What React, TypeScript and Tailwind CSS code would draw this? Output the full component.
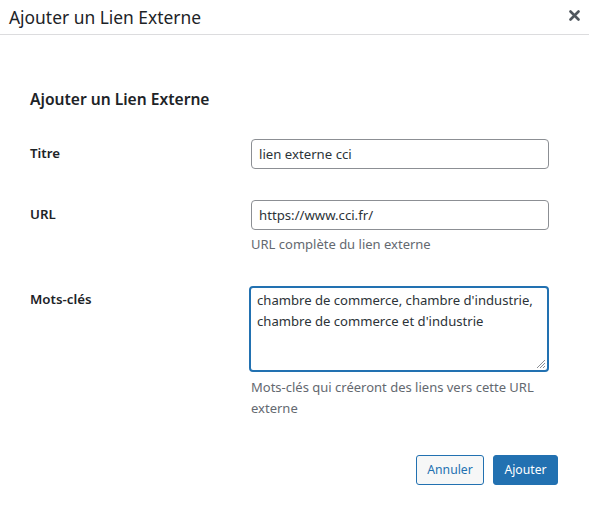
import React from "react";

const font = { fontFamily: '"Noto Sans", "Open Sans", sans-serif' };

function Row({ label, children, labelTop }: { label: string; children: React.ReactNode; labelTop: string }) {
  return (
    <div className="grid grid-cols-[221px_298px]">
      <div className={`text-[13.3px] font-semibold text-[#1d2327] ${labelTop}`}>{label}</div>
      <div>{children}</div>
    </div>
  );
}

export default function App() {
  return (
    <div className="w-[589px] h-[509px] bg-white text-[#2c3338]" style={font}>
      <div className="h-[35px] border-b border-[#dcdcde] flex items-center justify-between pl-[9px] pr-[8px]">
        <h1 className="text-[17.4px] leading-[24px] text-[#1d2327] -mt-[1px]">Ajouter un Lien Externe</h1>
        <button className="w-[14px] h-[14px] flex items-center justify-center -mt-[3px]" aria-label="Fermer">
          <svg width="11" height="11" viewBox="0 0 11 11">
            <path d="M1.5 1.5 L9.5 9.5 M9.5 1.5 L1.5 9.5" stroke="#50575e" strokeWidth="2.6" strokeLinecap="round" />
          </svg>
        </button>
      </div>

      <div className="pl-[30px] pt-[53px]">
        <h2 className="text-[15.6px] leading-[22px] font-semibold text-[#1d2327]">Ajouter un Lien Externe</h2>

        <div className="mt-[29px] flex flex-col">
          <Row label="Titre" labelTop="pt-[5px]">
            <input
              readOnly
              value="lien externe cci"
              className="w-[298px] h-[30px] border border-[#8c8f94] rounded-[4px] px-[7px] text-[13.2px] text-[#2c3338] outline-none"
              style={font}
            />
          </Row>

          <div className="h-[31px]" />

          <Row label="URL" labelTop="pt-[5px]">
            <input
              readOnly
              value="https://www.cci.fr/"
              className="w-[298px] h-[30px] border border-[#8c8f94] rounded-[4px] px-[7px] text-[13.2px] text-[#2c3338] outline-none"
              style={font}
            />
            <p className="mt-[4px] text-[13px] leading-[20px] text-[#646970]">URL complète du lien externe</p>
          </Row>

          <div className="h-[32px]" />

          <Row label="Mots-clés" labelTop="pt-[4px]">
            <div className="relative -ml-[2px] w-[300px]">
              <textarea
                readOnly
                value={"chambre de commerce, chambre d'industrie,\nchambre de commerce et d'industrie"}
                className="block w-[300px] h-[86px] border-2 border-[#2271b1] rounded-[4px] px-[6px] pt-[2px] text-[13.1px] leading-[21px] text-[#2c3338] outline-none resize-none whitespace-pre overflow-hidden"
                style={font}
              />
              <svg className="absolute right-[3px] bottom-[3px]" width="10" height="10" viewBox="0 0 10 10">
                <path d="M9 1 L1 9 M9 4 L4 9 M9 7 L7 9" stroke="#8c8f94" strokeWidth="1" />
              </svg>
            </div>
            <p className="mt-[5px] text-[13px] leading-[21px] text-[#646970]">
              Mots-clés qui créeront des liens vers cette URL
              <br />
              externe
            </p>
          </Row>
        </div>

        <div className="mt-[36px] pr-[31px] flex justify-end gap-[9px]">
          <button
            className="h-[30px] w-[68px] border border-[#2271b1] bg-[#f6f7f7] text-[#2271b1] rounded-[3px] text-[12.2px]"
            style={font}
          >
            Annuler
          </button>
          <button
            className="h-[30px] w-[65px] border border-[#2271b1] bg-[#2271b1] text-white rounded-[3px] text-[12.2px]"
            style={font}
          >
            Ajouter
          </button>
        </div>
      </div>
    </div>
  );
}
